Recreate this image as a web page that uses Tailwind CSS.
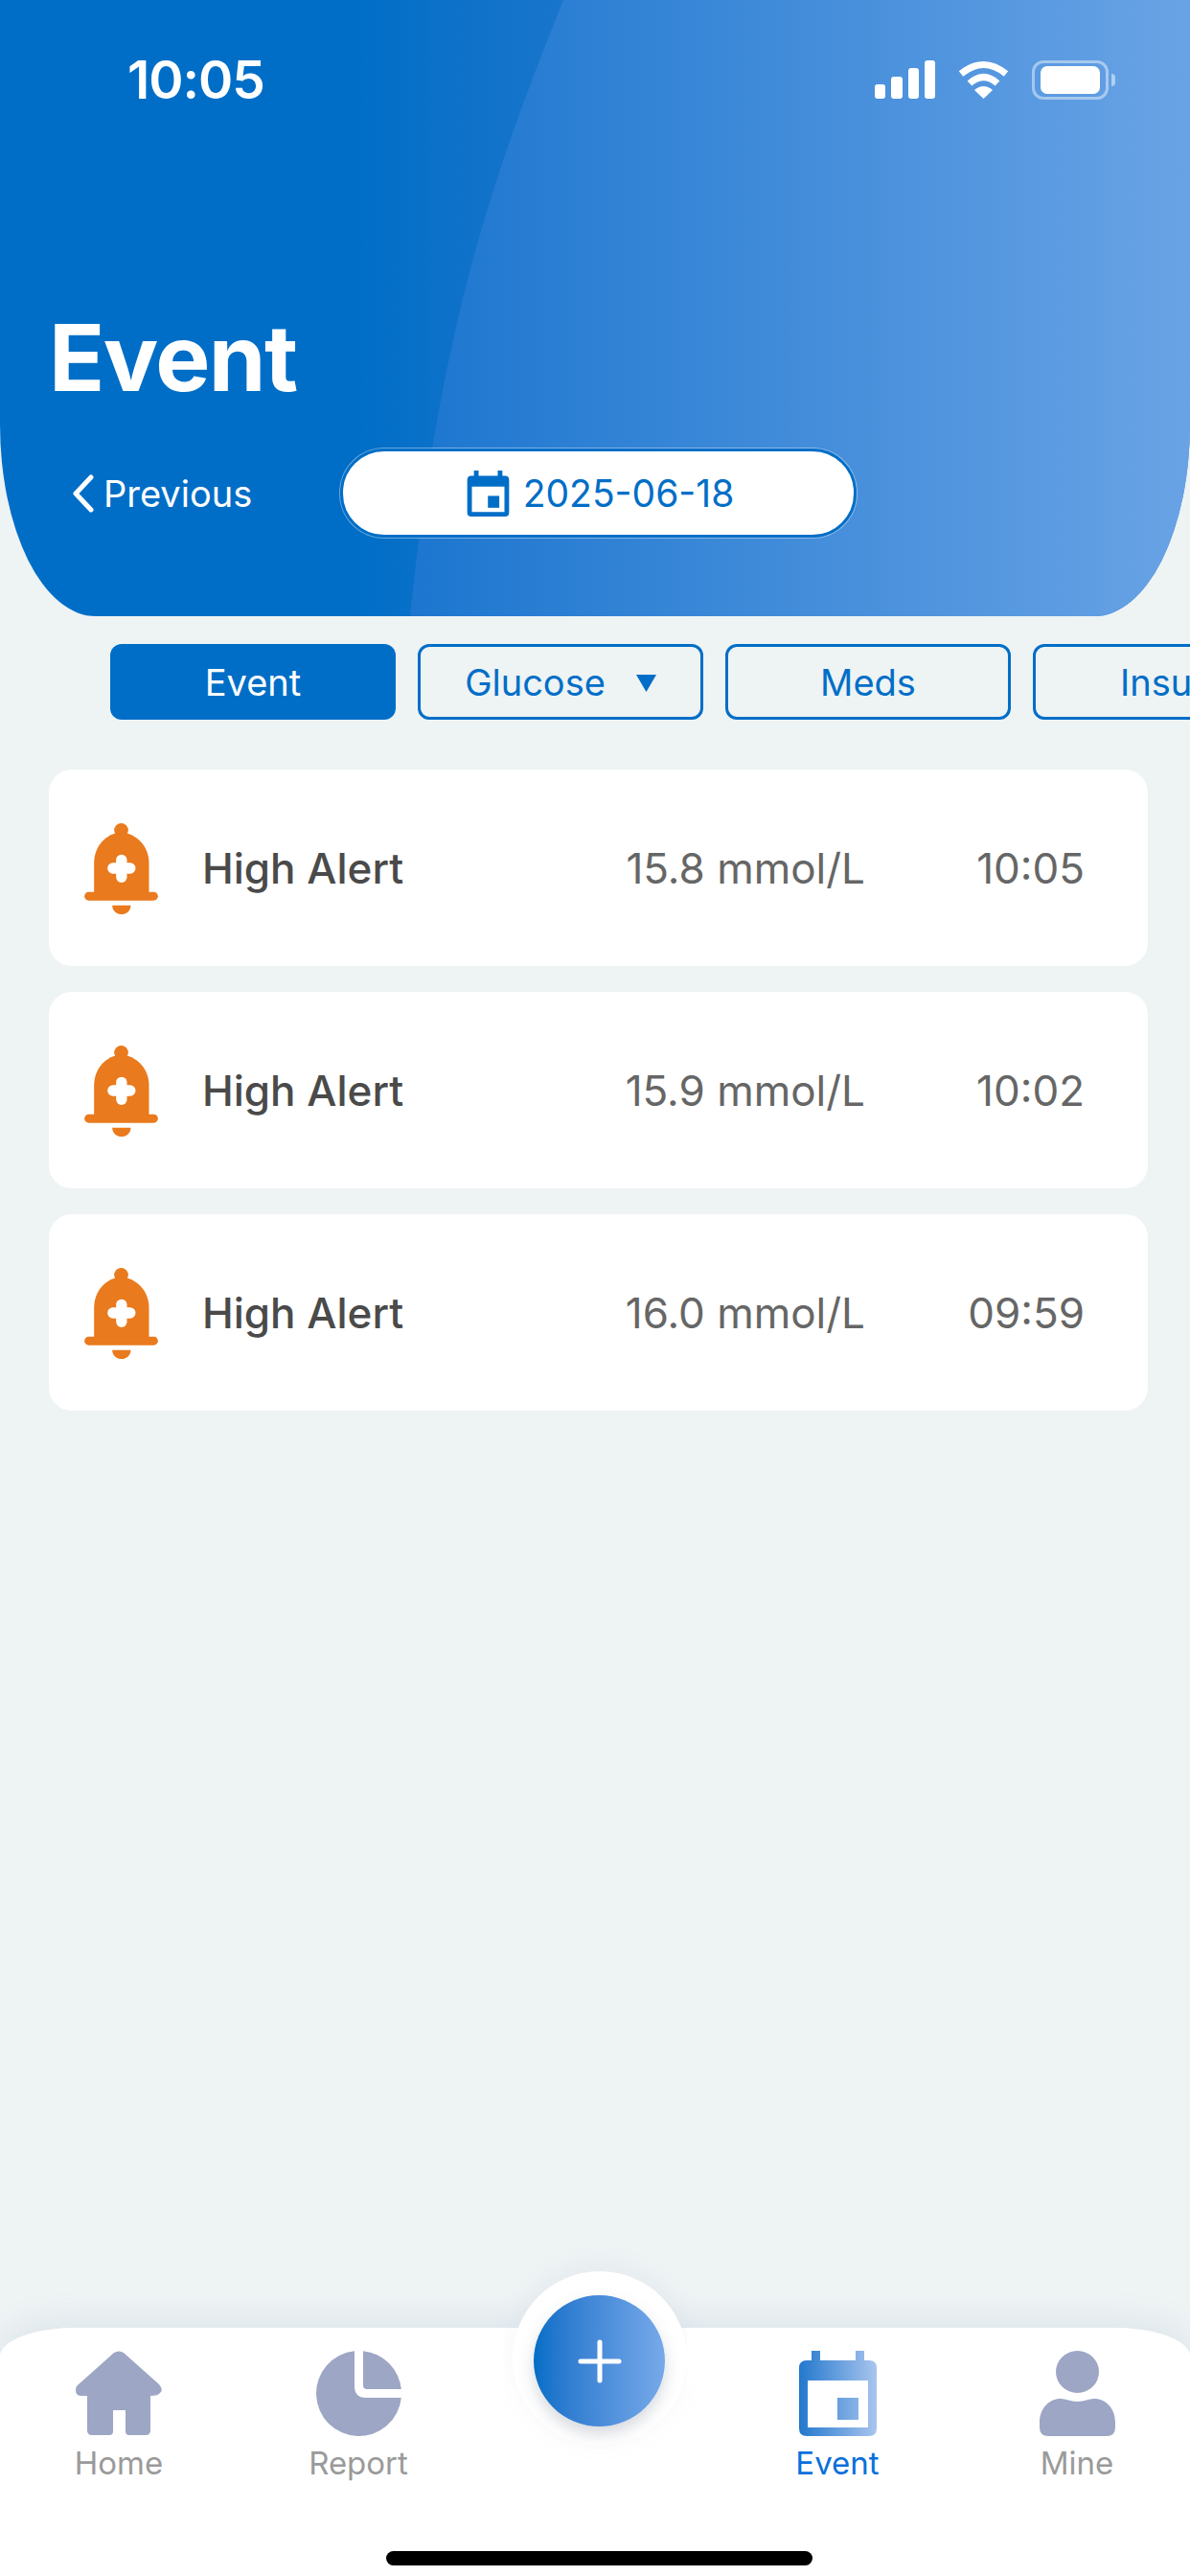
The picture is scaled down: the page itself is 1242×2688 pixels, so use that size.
<!DOCTYPE html>
<html lang="en">
<head>
    <meta charset="UTF-8">
    <script src="https://cdn.jsdelivr.net/npm/@tailwindcss/browser@4"></script>
    <title>Event</title>
</head>
<body class="bg-[#eef3f4]">
    <!-- shared icons -->
    <svg class="hidden">
        <symbol id="bell" viewBox="0 0 230 285">
            <circle cx="115" cy="22" r="22" fill="#e97a1d"/>
            <path d="M30 220V125C30 70 70 30 115 30C160 30 202 70 202 125V220Z" fill="#e97a1d"/>
            <rect x="0" y="215" width="230" height="27" rx="13.5" fill="#e97a1d"/>
            <path d="M87 257H145C145 275 130 285 116 285C102 285 87 275 87 257Z" fill="#e97a1d"/>
            <rect x="72" y="124" width="88" height="34" rx="17" fill="#fff"/>
            <rect x="99" y="98" width="34" height="88" rx="17" fill="#fff"/>
        </symbol>
    </svg>

    <div class="relative flex h-[2688px] w-[1242px] flex-col overflow-hidden font-['Inter',sans-serif]">
        <!-- header -->
        <header class="relative h-[643px] shrink-0 overflow-hidden rounded-bl-[100px_200px] rounded-br-[100px_200px] bg-linear-to-r from-[#006ec7] from-30% to-[#3f8ad8]">
            <svg class="absolute inset-0" width="1242" height="643" viewBox="0 0 1242 643">
                <defs>
                    <linearGradient id="wave" x1="428" y1="0" x2="1242" y2="0" gradientUnits="userSpaceOnUse">
                        <stop offset="0" stop-color="#1c76cf"/>
                        <stop offset="1" stop-color="#69a3e5"/>
                    </linearGradient>
                </defs>
                <path d="M588 0C520 170 460 330 428 643H1242V0Z" fill="url(#wave)"/>
            </svg>
            <div class="relative flex h-[643px] flex-col">
                <div class="flex h-[167px] items-start justify-between pl-[133px] pr-[78px] pt-[53px]">
                    <span class="text-[55px] leading-[61px] font-semibold tracking-[-1px] text-white">10:05</span>
                    <div class="flex items-start gap-[24px] pt-[10px]">
                        <svg width="63" height="40" viewBox="0 0 63 40" fill="#fff">
                            <rect x="0" y="25" width="11" height="15" rx="3"/>
                            <rect x="17" y="17" width="12" height="23" rx="3"/>
                            <rect x="35" y="8" width="11" height="32" rx="3"/>
                            <rect x="52" y="0" width="11" height="40" rx="3"/>
                        </svg>
                        <svg width="53" height="40" viewBox="0 0 53 40" fill="none" stroke="#fff">
                            <path d="M3 14Q26.5 -5 50 14" stroke-width="7"/>
                            <path d="M12 24Q26.5 11 41 24" stroke-width="7"/>
                            <path d="M17 31Q26.5 23 36 31L26.5 40Z" fill="#fff" stroke="none"/>
                        </svg>
                        <div class="flex items-center gap-[3px]">
                            <div class="flex h-[41px] w-[80px] items-center justify-center rounded-[12px] border-[3px] border-white/45">
                                <div class="h-[29px] w-[62px] rounded-[7px] bg-white"></div>
                            </div>
                            <div class="h-[13px] w-[4px] rounded-r-full bg-white/50"></div>
                        </div>
                    </div>
                </div>
                <h1 class="pl-[51px] pt-[148px] text-[96px] leading-[116px] font-bold tracking-[-1.5px] text-white">Event</h1>
                <div class="flex items-center pl-[75px] pt-[37px]">
                    <div class="flex w-[280px] items-center gap-[10px]">
                        <svg width="23" height="40" viewBox="0 0 23 40" fill="none" stroke="#fff" stroke-width="5" stroke-linecap="round" stroke-linejoin="round"><path d="M20 3L4 20L20 37"/></svg>
                        <span class="text-[38px] leading-[44px] text-white">Previous</span>
                    </div>
                    <div class="flex h-[93px] w-[539px] items-center justify-center gap-[13px] rounded-[46px] border-[3px] border-[#006ec7] bg-white pl-[3px] ring-1 ring-white/40">
                        <svg width="47" height="48" viewBox="0 0 81 89" fill="#006ec7">
                            <path fill-rule="evenodd" d="M13 0H22V10H59V0H68V10H73Q81 10 81 18V81Q81 89 73 89H8Q0 89 0 81V18Q0 10 8 10H13ZM9 31V80H72V31Z"/>
                            <rect x="40" y="49" width="22" height="23"/>
                        </svg>
                        <span class="text-[39px] leading-[44px] text-[#006ec7]">2025-06-18</span>
                    </div>
                </div>
            </div>
        </header>

        <!-- filter tabs -->
        <div class="mt-[29px] flex gap-[23px] pl-[115px] text-[38px] text-[#006ec7]">
            <div class="flex h-[79px] w-[298px] shrink-0 items-center justify-center rounded-[12px] bg-[#006ec7] pt-[2px] text-white">Event</div>
            <div class="flex h-[79px] w-[298px] shrink-0 items-center justify-center gap-[32px] rounded-[12px] border-[3px] border-[#006ec7] pt-[2px]">
                <span>Glucose</span>
                <svg width="21" height="18" viewBox="0 0 21 18" fill="#006ec7"><path d="M0 0H21L10.5 18Z"/></svg>
            </div>
            <div class="flex h-[79px] w-[298px] shrink-0 items-center justify-center rounded-[12px] border-[3px] border-[#006ec7] pt-[2px]">Meds</div>
            <div class="flex h-[79px] w-[298px] shrink-0 items-center justify-center rounded-[12px] border-[3px] border-[#006ec7] pt-[2px]">Insulin</div>
        </div>

        <!-- alert list -->
        <div class="mt-[52px] flex flex-col gap-[27px] pl-[51px] pr-[44px] text-[44px]">
            <div class="flex h-[205px] items-center rounded-[24px] bg-white pl-[37px] pr-[66px]">
                <svg class="mt-[2px]" width="77" height="95"><use href="#bell"/></svg>
                <span class="ml-[46px] w-[400px] font-medium text-[#4a4a4a]">High Alert</span>
                <span class="w-[292px] whitespace-nowrap text-right text-[#666]">15.8 mmol/L</span>
                <span class="flex-1 text-right text-[#666]">10:05</span>
            </div>
            <div class="flex h-[205px] items-center rounded-[24px] bg-white pl-[37px] pr-[66px]">
                <svg class="mt-[2px]" width="77" height="95"><use href="#bell"/></svg>
                <span class="ml-[46px] w-[400px] font-medium text-[#4a4a4a]">High Alert</span>
                <span class="w-[292px] whitespace-nowrap text-right text-[#666]">15.9 mmol/L</span>
                <span class="flex-1 text-right text-[#666]">10:02</span>
            </div>
            <div class="flex h-[205px] items-center rounded-[24px] bg-white pl-[37px] pr-[66px]">
                <svg class="mt-[2px]" width="77" height="95"><use href="#bell"/></svg>
                <span class="ml-[46px] w-[400px] font-medium text-[#4a4a4a]">High Alert</span>
                <span class="w-[292px] whitespace-nowrap text-right text-[#666]">16.0 mmol/L</span>
                <span class="flex-1 text-right text-[#666]">09:59</span>
            </div>
        </div>

        <!-- bottom nav -->
        <nav class="relative mt-auto h-[259px] rounded-t-[80px_30px] bg-white shadow-[0_-8px_30px_rgba(150,170,200,0.18)]">
            <div class="absolute left-[535px] top-[-59px] h-[182px] w-[182px] rounded-full bg-white shadow-[0_-6px_24px_rgba(150,170,200,0.1)]"></div>
            <div class="absolute inset-x-0 top-0 h-[60px] rounded-t-[80px_30px] bg-white [clip-path:inset(0_717px_0_0)]"></div>
            <div class="absolute inset-x-0 top-0 h-[60px] rounded-t-[80px_30px] bg-white [clip-path:inset(0_0_0_717px)]"></div>
            <div class="absolute left-[557px] top-[-34px] flex h-[137px] w-[137px] items-center justify-center rounded-full bg-linear-to-r from-[#006ec7] to-[#76a9ea] shadow-[0_8px_16px_rgba(120,130,150,0.3)]">
                <svg width="46" height="46" viewBox="0 0 46 46" stroke="#fff" stroke-width="5" stroke-linecap="round"><path d="M23 3V43M3 23H43"/></svg>
            </div>
            <div class="relative -ml-px grid w-[1250px] grid-cols-[repeat(5,250px)] pt-[24px] text-[33px] leading-[40px] text-[#9a9a9a]">
                <div class="flex flex-col items-center gap-[8px]">
                    <svg width="90" height="89" viewBox="0 0 90 89" fill="#9da6c4"><path d="M40 2Q45 -1 50 2L87 35Q92 41 88 44Q86 47 78 47V83Q78 88 73 88H56Q52 88 52 84V62H39V84Q39 88 35 88H17Q12 88 12 83V47H6Q0 47 0 41Q0 37 3 35Z"/></svg>
                    <span>Home</span>
                </div>
                <div class="flex flex-col items-center gap-[8px]">
                    <svg width="89" height="89" viewBox="0 0 89 89" fill="#9da6c4">
                        <path d="M40 .2A44.5 44.5 0 1 0 88.8 49H52Q40 49 40 37Z"/>
                        <path d="M49 .2A44.5 44.5 0 0 1 88.8 40H53Q49 40 49 36Z"/>
                    </svg>
                    <span>Report</span>
                </div>
                <div></div>
                <div class="flex flex-col items-center gap-[8px]">
                    <svg width="81" height="89" viewBox="0 0 81 89">
                        <defs>
                            <linearGradient id="cal" x1="0" y1="0" x2="81" y2="0" gradientUnits="userSpaceOnUse">
                                <stop offset="0" stop-color="#2378cd"/>
                                <stop offset="1" stop-color="#a9c5ee"/>
                            </linearGradient>
                        </defs>
                        <path fill="url(#cal)" fill-rule="evenodd" d="M13 0H22V10H59V0H68V10H73Q81 10 81 18V81Q81 89 73 89H8Q0 89 0 81V18Q0 10 8 10H13ZM9 31V80H72V31Z"/>
                        <rect x="40" y="49" width="22" height="23" fill="url(#cal)"/>
                    </svg>
                    <span class="text-[#0a6fdc]">Event</span>
                </div>
                <div class="flex flex-col items-center gap-[8px]">
                    <svg width="79" height="89" viewBox="0 0 79 89" fill="#9da6c4">
                        <ellipse cx="39.5" cy="22" rx="22.5" ry="22"/>
                        <path d="M0 75C0 60 10 50 22 50C28 50 32 53 39.5 53C47 53 51 50 57 50C69 50 79 60 79 75V80Q79 89 70 89H9Q0 89 0 80Z"/>
                    </svg>
                    <span>Mine</span>
                </div>
            </div>
            <div class="absolute bottom-[11px] left-[403px] h-[15px] w-[445px] rounded-full bg-black"></div>
        </nav>
    </div>
</body>
</html>
